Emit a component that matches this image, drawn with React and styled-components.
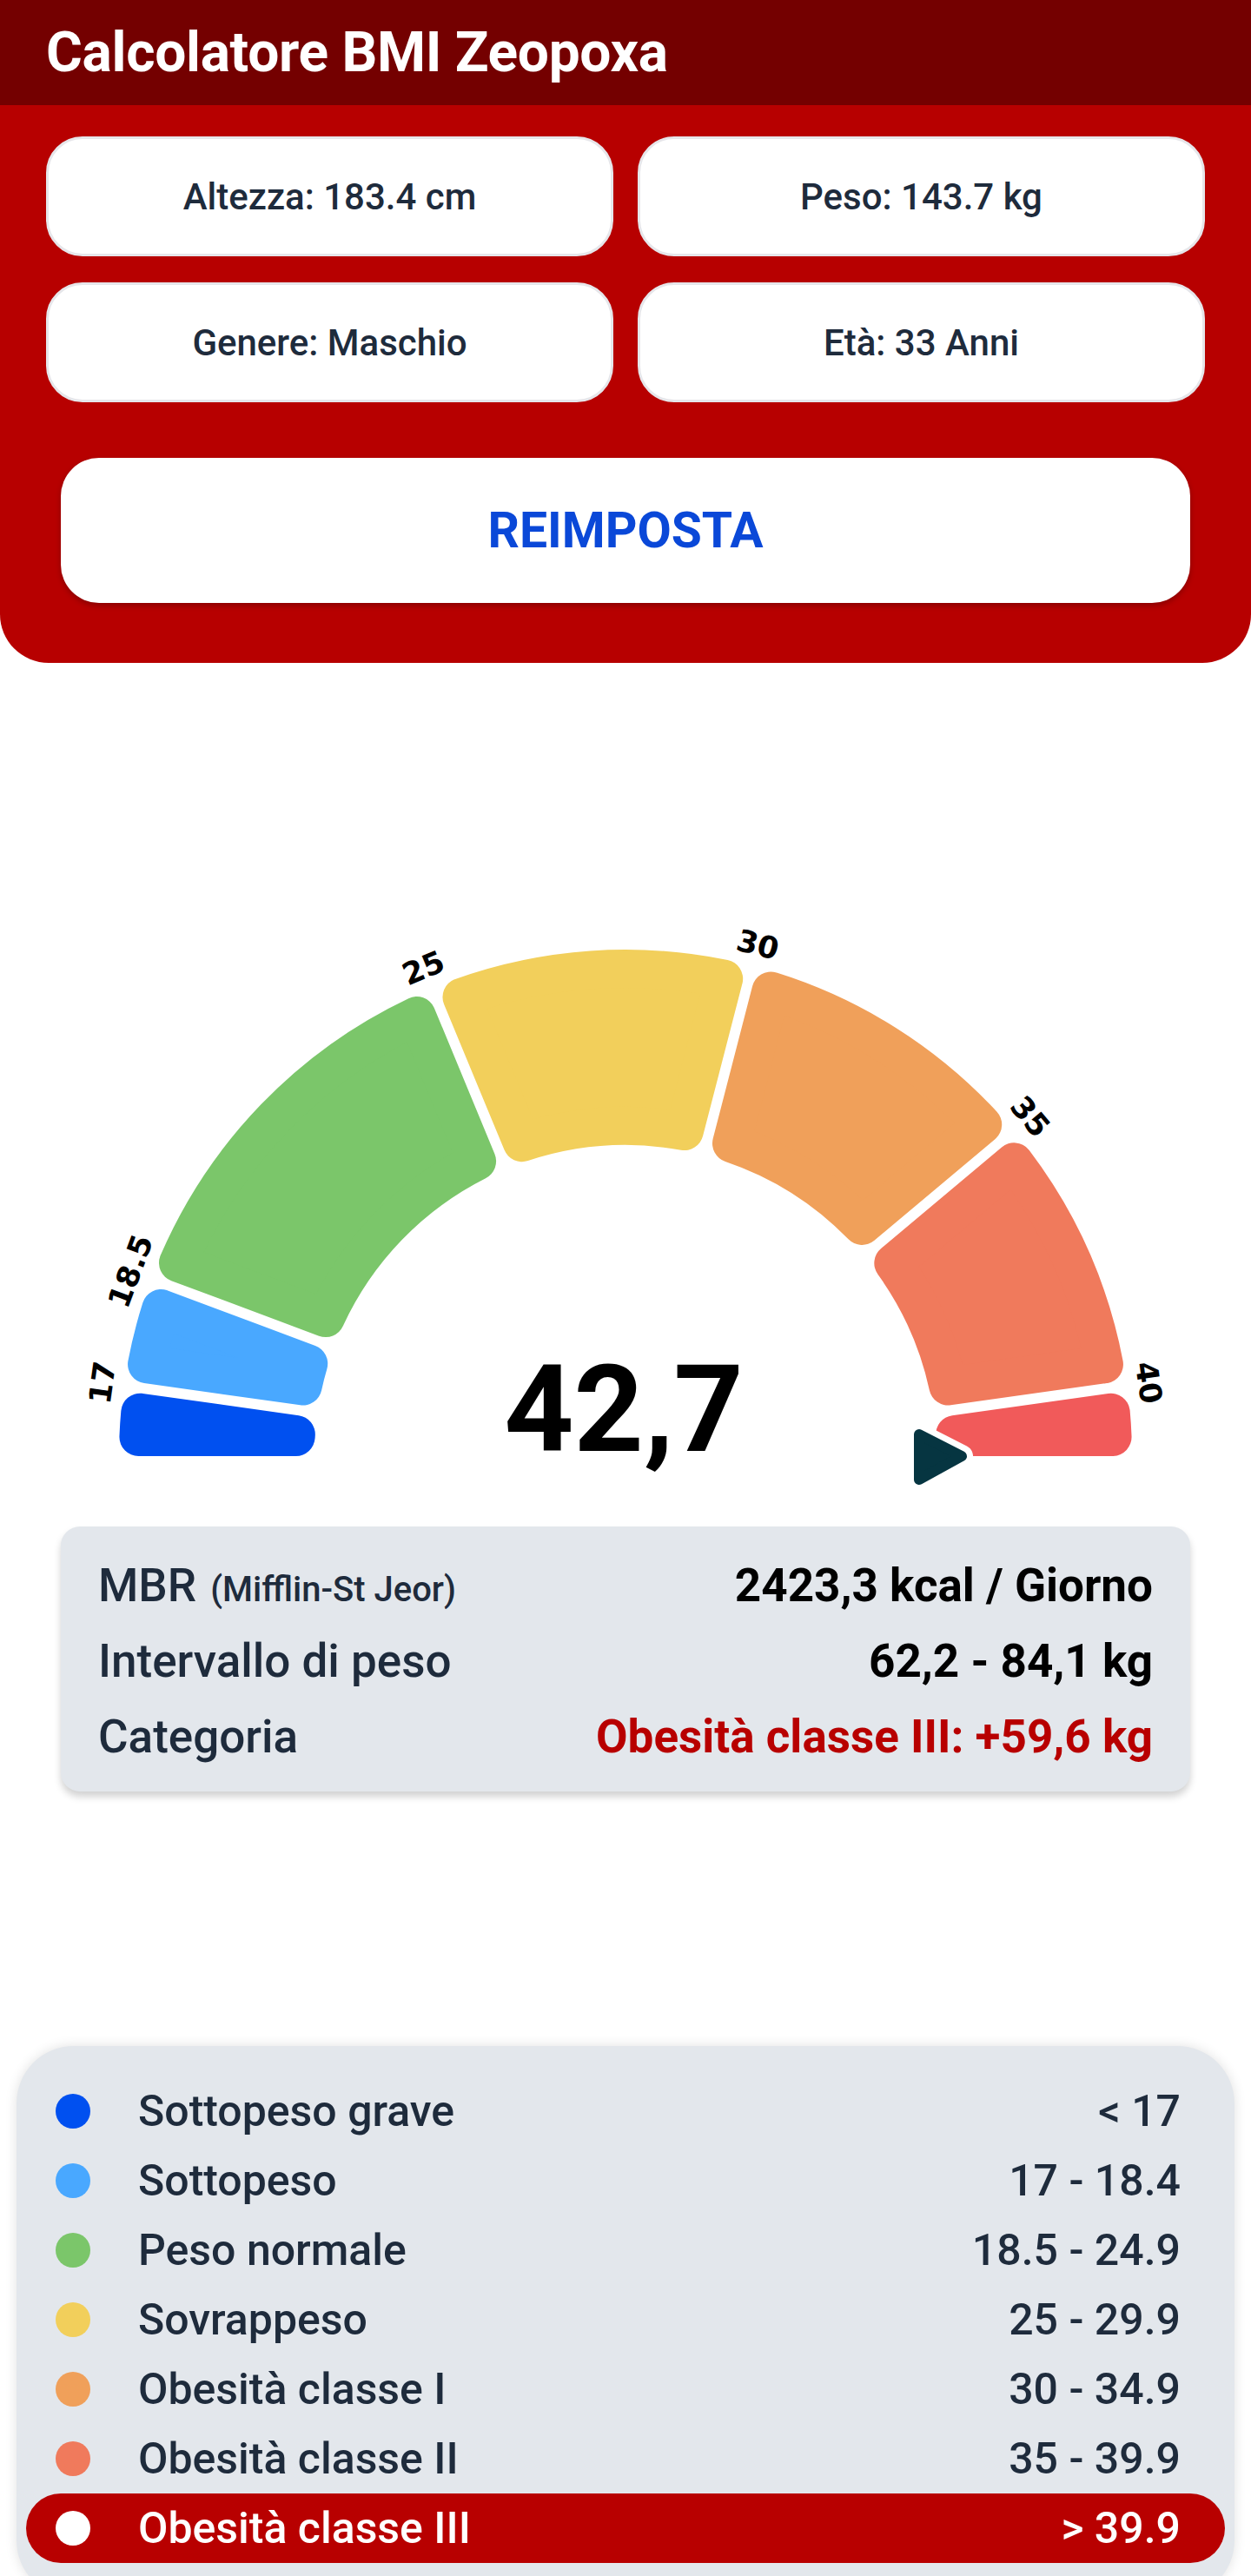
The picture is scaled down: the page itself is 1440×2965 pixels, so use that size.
import React from "react";
import styled, { createGlobalStyle } from "styled-components";

const GlobalStyle = createGlobalStyle`
  body {
    margin: 0;
    background: #ffffff;
    font-family: Roboto, "Liberation Sans", Arial, sans-serif;
  }
`;

// gauge geometry (svg coords)
const CX = 720;
const CY = 636;
const R_OUT = 583;
const R_IN = 358;
const RC = 22;
const GAP = 6;

const segments = [
  { from: 0, to: 8, color: "#0050f0" },
  { from: 8, to: 20.5, color: "#49a8ff" },
  { from: 20.5, to: 67.5, color: "#7bc66a" },
  { from: 67.5, to: 104.5, color: "#f2cf5b" },
  { from: 104.5, to: 140, color: "#f0a05a" },
  { from: 140, to: 172, color: "#f07a5c" },
  { from: 172, to: 180, color: "#f15a5a" },
];

const ticks = [
  { at: 8, label: "17" },
  { at: 20.5, label: "18.5" },
  { at: 67.5, label: "25" },
  { at: 104.5, label: "30" },
  { at: 140, label: "35" },
  { at: 172, label: "40" },
];

const legend = [
  { name: "Sottopeso grave", range: "< 17", color: "#0050f0" },
  { name: "Sottopeso", range: "17 - 18.4", color: "#49a8ff" },
  { name: "Peso normale", range: "18.5 - 24.9", color: "#7bc66a" },
  { name: "Sovrappeso", range: "25 - 29.9", color: "#f2cf5b" },
  { name: "Obesità classe I", range: "30 - 34.9", color: "#f0a05a" },
  { name: "Obesità classe II", range: "35 - 39.9", color: "#f07a5c" },
  { name: "Obesità classe III", range: "> 39.9", color: "#f15a5a", active: true },
];

const rad = (a) => (a * Math.PI) / 180;
const deg = (a) => (a * 180) / Math.PI;
const pt = (a, rho) => [CX - rho * Math.cos(rad(a)), CY - rho * Math.sin(rad(a))];

function segPath(a0, a1, first, last) {
  const d0 = (first ? 0 : GAP) + RC;
  const d1 = (last ? 0 : GAP) + RC;
  const ro = R_OUT - RC;
  const ri = R_IN + RC;
  const o0 = pt(a0 + deg(Math.asin(d0 / ro)), ro);
  const o1 = pt(a1 - deg(Math.asin(d1 / ro)), ro);
  const i1 = pt(a1 - deg(Math.asin(d1 / ri)), ri);
  const i0 = pt(a0 + deg(Math.asin(d0 / ri)), ri);
  return `M${o0[0]} ${o0[1]} A${ro} ${ro} 0 0 1 ${o1[0]} ${o1[1]} L${i1[0]} ${i1[1]} A${ri} ${ri} 0 0 0 ${i0[0]} ${i0[1]} Z`;
}

function Gauge({ value }) {
  return (
    <GaugeSvg viewBox="0 0 1440 690" width="1440" height="690">
      {segments.map((s, i) => (
        <path
          key={i}
          d={segPath(s.from, s.to, i === 0, i === segments.length - 1)}
          fill={s.color}
          stroke={s.color}
          strokeWidth={RC * 2}
          strokeLinejoin="round"
        />
      ))}
      {ticks.map((t) => {
        const [x, y] = pt(t.at, 608);
        return (
          <TickText
            key={t.label}
            x={x}
            y={y}
            textAnchor="middle"
            dominantBaseline="central"
            transform={`rotate(${t.at - 90} ${x} ${y})`}
          >
            {t.label}
          </TickText>
        );
      })}
      <polygon
        points="1058,611 1107,636 1058,663"
        fill="#ffffff"
        stroke="#ffffff"
        strokeWidth="26"
        strokeLinejoin="round"
      />
      <polygon
        points="1058,611 1107,636 1058,663"
        fill="#063541"
        stroke="#063541"
        strokeWidth="12"
        strokeLinejoin="round"
      />
      <ValueText x={CX - 2} y={630} textAnchor="middle">
        {value}
      </ValueText>
    </GaugeSvg>
  );
}

export default function App() {
  return (
    <Page>
      <GlobalStyle />
      <TopBar>
        <Title>Calcolatore BMI Zeopoxa</Title>
      </TopBar>
      <InputPanel>
        <FieldGrid>
          <Field>Altezza: 183.4 cm</Field>
          <Field>Peso: 143.7 kg</Field>
          <Field>Genere: Maschio</Field>
          <Field>Età: 33 Anni</Field>
        </FieldGrid>
        <ResetButton>REIMPOSTA</ResetButton>
      </InputPanel>

      <GaugeArea>
        <Gauge value="42,7" />
      </GaugeArea>

      <InfoCard>
        <InfoRow>
          <InfoLabel>
            MBR <Small>(Mifflin-St Jeor)</Small>
          </InfoLabel>
          <InfoValue>2423,3 kcal / Giorno</InfoValue>
        </InfoRow>
        <InfoRow>
          <InfoLabel>Intervallo di peso</InfoLabel>
          <InfoValue>62,2 - 84,1 kg</InfoValue>
        </InfoRow>
        <InfoRow>
          <InfoLabel>Categoria</InfoLabel>
          <InfoValue $alert>Obesità classe III: +59,6 kg</InfoValue>
        </InfoRow>
      </InfoCard>

      <LegendCard>
        {legend.map((l) => (
          <LegendRow key={l.name} $active={l.active}>
            <Dot $color={l.active ? "#ffffff" : l.color} />
            <LegendName>{l.name}</LegendName>
            <LegendRange>{l.range}</LegendRange>
          </LegendRow>
        ))}
      </LegendCard>
    </Page>
  );
}

const Page = styled.div`
  width: 1440px;
  padding-bottom: 60px;
`;

const TopBar = styled.header`
  height: 121px;
  background: #740000;
  display: flex;
  align-items: center;
  padding: 0 53px;
  box-sizing: border-box;
`;

const Title = styled.h1`
  margin: 0;
  color: #ffffff;
  font-size: 64px;
  font-weight: 700;
  letter-spacing: -0.3px;
`;

const InputPanel = styled.section`
  background: #b70000;
  padding: 36px 53px 69px;
  border-radius: 0 0 56px 56px;
`;

const FieldGrid = styled.div`
  display: grid;
  grid-template-columns: 1fr 1fr;
  column-gap: 28px;
  row-gap: 30px;
`;

const Field = styled.div`
  height: 138px;
  box-sizing: border-box;
  background: #ffffff;
  border: 3px solid #e6e6ea;
  border-radius: 42px;
  display: flex;
  align-items: center;
  justify-content: center;
  color: #1e2b3c;
  font-size: 42px;
  font-weight: 500;
`;

const ResetButton = styled.button`
  display: block;
  width: calc(100% - 34px);
  margin: 64px 17px 0;
  height: 167px;
  border: none;
  border-radius: 44px;
  background: #ffffff;
  color: #0a48d8;
  font-family: Roboto, "Liberation Sans", Arial, sans-serif;
  font-size: 57px;
  font-weight: 700;
  box-shadow: 0 3px 6px rgba(0, 0, 0, 0.25);
`;

const GaugeArea = styled.div`
  padding-top: 277px;
`;

const GaugeSvg = styled.svg`
  display: block;
`;

const TickText = styled.text`
  font-family: "DejaVu Sans", sans-serif;
  font-weight: 700;
  font-size: 35px;
  fill: #000000;
`;

const ValueText = styled.text`
  font-family: Roboto, "Liberation Sans", sans-serif;
  font-weight: 700;
  font-size: 140px;
  fill: #000000;
`;

const InfoCard = styled.section`
  margin: 27px 70px 0;
  padding: 24px 43px 20px;
  background: #e3e7ec;
  border-radius: 22px;
  box-shadow: 0 6px 8px rgba(0, 0, 0, 0.18);
`;

const InfoRow = styled.div`
  height: 87px;
  display: flex;
  align-items: center;
  justify-content: space-between;
`;

const InfoLabel = styled.div`
  color: #1e2b3c;
  font-size: 53px;
  font-weight: 500;
  display: flex;
  align-items: baseline;
`;

const Small = styled.span`
  font-size: 40px;
  margin-left: 16px;
`;

const InfoValue = styled.div`
  color: ${(p) => (p.$alert ? "#b80000" : "#000000")};
  font-size: 53px;
  font-weight: 700;
`;

const LegendCard = styled.section`
  margin: 293px 19px 0;
  padding: 35px 11px 40px;
  background: #e3e7ec;
  border-radius: 66px;
  box-shadow: 0 0 14px rgba(0, 0, 0, 0.12);
`;

const LegendRow = styled.div`
  height: 80px;
  display: flex;
  align-items: center;
  padding: 0 51px 0 34px;
  border-radius: 40px;
  background: ${(p) => (p.$active ? "#b80000" : "transparent")};
  color: ${(p) => (p.$active ? "#ffffff" : "#1e2b3c")};
  font-size: 50px;
  font-weight: 500;
`;

const Dot = styled.span`
  width: 40px;
  height: 40px;
  border-radius: 50%;
  background: ${(p) => p.$color};
  flex: none;
`;

const LegendName = styled.span`
  margin-left: 55px;
  flex: 1;
`;

const LegendRange = styled.span``;
